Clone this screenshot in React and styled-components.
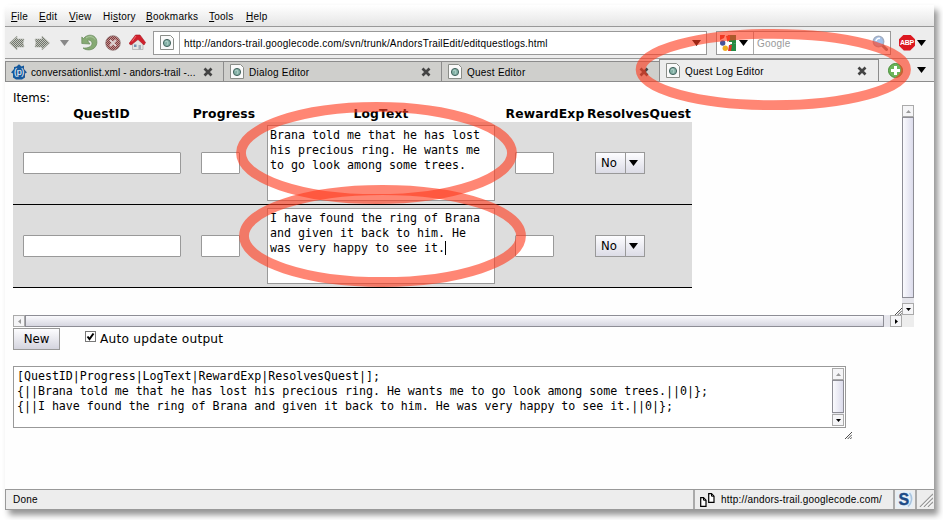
import React from "react";
import styled, { createGlobalStyle } from "styled-components";

const ui = '"Liberation Sans", Arial, sans-serif';
const page = '"DejaVu Sans", Verdana, sans-serif';
const mono = '"DejaVu Sans Mono", monospace';

const Global = createGlobalStyle`
  * { box-sizing: border-box; }
  html, body { margin: 0; background: #fff; overflow: hidden; }
  svg { display: block; flex: none; }
`;

const Desktop = styled.div`
  position: relative;
  width: 943px;
  height: 520px;
  padding: 5px 9px 10px 5px;
  background: #fff;
  overflow: hidden;
`;
const Window = styled.div`
  width: 929px;
  height: 505px;
  display: flex;
  flex-direction: column;
  background: #fefefe;
  box-shadow: 4px 5px 6px rgba(0, 0, 0, 0.42);
  font: 10px ${ui};
  letter-spacing: 0.19px;
  color: #000;
`;
const MenuBar = styled.nav`
  height: 22px;
  flex: none;
  display: flex;
  padding: 1px 0 0 6px;
  background: linear-gradient(#fff, #e5e5e5);
  border-bottom: 1px solid #999;
`;
const MenuItem = styled.span`
  width: ${(p) => p.$w}px;
  line-height: 21px;
  white-space: nowrap;
  letter-spacing: 0.25px;
  u { text-underline-offset: 1px; }
`;
const Toolbar = styled.div`
  height: 32px;
  flex: none;
  display: flex;
  align-items: center;
  background: #ededed;
  border-bottom: 1px solid #999;
`;
const NavIcons = styled.div`
  width: 148px;
  flex: none;
  display: flex;
  align-items: center;
  padding-left: 4px;
`;
const Slot = styled.div`
  width: ${(p) => p.$w}px;
  flex: none;
  display: flex;
  align-items: center;
`;
const Field = styled.div`
  width: ${(p) => p.$w}px;
  height: 24px;
  flex: none;
  display: flex;
  align-items: center;
  background: #fff;
  border: 1px solid #999;
  margin-right: ${(p) => p.$gap}px;
`;
const FieldIcon = styled.div`
  width: ${(p) => p.$w}px;
  height: 100%;
  flex: none;
  display: flex;
  align-items: center;
  gap: 3px;
  padding-left: ${(p) => p.$pad}px;
  border-right: 1px solid #aaa;
`;
const FieldText = styled.span`
  flex: 1;
  padding: 2px 0 0 ${(p) => (p.$hint ? 3 : 4)}px;
  color: ${(p) => (p.$hint ? "#999" : "#000")};
  white-space: nowrap;
`;
const TabStrip = styled.div`
  height: 23px;
  flex: none;
  display: flex;
  align-items: flex-end;
  background: #ededed;
  border-bottom: 1px solid #8c8c8c;
`;
const Tab = styled.div`
  width: ${(p) => p.$w}px;
  height: ${(p) => (p.$active ? 22 : 20)}px;
  flex: none;
  display: flex;
  align-items: center;
  padding-left: ${(p) => p.$start || 6}px;
  padding-right: ${(p) => p.$end}px;
  background: ${(p) => (p.$active ? "#ededed" : "#cfcfcc")};
  border-top: 1px solid #8c8c8c;
  border-left: 1px solid #8c8c8c;
  border-right: ${(p) => (p.$active ? "1px solid #8c8c8c" : "none")};
`;
const TabTitle = styled.span`
  flex: 1;
  padding: 2px 0 0 ${(p) => p.$gap || 5}px;
  letter-spacing: ${(p) => (p.$tight ? 0.1 : 0.24)}px;
  white-space: nowrap;
`;
const TabActions = styled.div`
  flex: 1;
  height: 22px;
  display: flex;
  align-items: center;
  gap: 14px;
  padding-left: 9px;
`;

const Content = styled.main`
  flex: 1;
  min-height: 0;
  display: flex;
  flex-direction: column;
  padding: 8px 0 0 8px;
  font: 12px ${page};
  letter-spacing: 0;
`;
const ItemsLabel = styled.div`
  height: 15px;
  line-height: 16px;
  font-size: 11.8px;
`;
const ScrollPane = styled.section`
  width: 901px;
  height: 222px;
  flex: none;
  display: grid;
  grid-template-columns: 889px 12px;
  grid-template-rows: 210px 12px;
`;
const Viewport = styled.div`
  display: flex;
  justify-content: space-between;
  align-items: flex-end;
`;
const Corner = styled.div`
  background: #ededed;
`;
const Table = styled.div`
  width: 679px;
  align-self: flex-start;
`;
const columns = "177px 68px 246px 82px 106px";
const HeadRow = styled.div`
  display: grid;
  grid-template-columns: ${columns};
  height: 17px;
  line-height: 18px;
  font-weight: bold;
  font-size: 12.3px;
  letter-spacing: 0.15px;
  text-align: center;
`;
const HeadCell = styled.div`
  display: flex;
  justify-content: center;
  white-space: nowrap;
`;
const Row = styled.div`
  display: grid;
  grid-template-columns: ${columns};
  height: 83px;
  align-items: center;
  background: #ddd;
  border-bottom: 1px solid #000;
`;
const Cell = styled.div`
  display: flex;
  padding-left: ${(p) => p.$pad}px;
`;
const Input = styled.div`
  width: ${(p) => p.$w}px;
  height: 22px;
  background: #fff;
  border: 1px solid #999;
  border-radius: 1px;
`;
const TextArea = styled.div`
  width: 228px;
  height: 76px;
  padding: 2px 2px;
  background: #fff;
  border: 1px solid #999;
  font: 11.63px/15px ${mono};
  white-space: pre;
`;
const Caret = styled.span`
  display: inline-block;
  width: 1px;
  height: 14px;
  background: #000;
  vertical-align: -3px;
`;
const Select = styled.div`
  width: 50px;
  height: 22px;
  display: flex;
  background: linear-gradient(#fdfdff, #dcdce6);
  border: 1px solid #999;
`;
const SelectText = styled.span`
  width: 30px;
  padding-left: 5px;
  line-height: 20px;
  font-size: 11.7px;
  border-right: 1px solid #999;
`;
const SelectArrow = styled.span`
  flex: 1;
  display: flex;
  align-items: center;
  padding-left: 3px;
`;

const VBar = styled.div`
  width: 12px;
  height: ${(p) => p.$h}px;
  display: flex;
  flex-direction: column;
  justify-content: space-between;
  background: #e6e6ec;
`;
const HBar = styled.div`
  height: 12px;
  display: flex;
  background: #e6e6ec;
`;
const BarButton = styled.div`
  width: 12px;
  height: 12px;
  flex: none;
  display: flex;
  align-items: center;
  justify-content: center;
  background: #f5f5f7;
  border: 1px solid #aaa;
`;
const VThumb = styled.div`
  flex: 1;
  margin-bottom: ${(p) => p.$gap}px;
  background: linear-gradient(90deg, #fafafd, #dcdcec);
  border: 1px solid #8d8d95;
`;
const HThumb = styled.div`
  flex: 1;
  margin-right: 6px;
  background: linear-gradient(#fafafd, #d6d6e0);
  border: 1px solid #8d8d95;
`;
const Controls = styled.div`
  height: 39px;
  flex: none;
  display: flex;
  align-items: flex-start;
  padding-top: 1px;
`;
const Button = styled.div`
  width: 47px;
  height: 22px;
  margin-right: 25px;
  line-height: 20px;
  text-align: center;
  font-size: 11.8px;
  background: linear-gradient(#fdfdff, #d4d4de);
  border: 1px solid #999;
`;
const CheckBox = styled.div`
  width: 11px;
  height: 11px;
  margin: 3px 4px 0 0;
  border: 1px solid #777;
  background: #fff;
`;
const CheckLabel = styled.span`
  line-height: 22px;
  font-size: 12.2px;
  letter-spacing: 0.23px;
`;
const Output = styled.div`
  width: 833px;
  height: 62px;
  flex: none;
  display: flex;
  justify-content: space-between;
  padding: 1px 1px 1px 3px;
  border: 1px solid #999;
  background: #fff;
  font: 11.63px/15px ${mono};
  letter-spacing: -0.02px;
  white-space: pre;
`;
const OutputText = styled.div`
  padding-top: 1px;
`;
const GripRow = styled.div`
  width: 839px;
  height: 11px;
  display: flex;
  align-items: flex-end;
  justify-content: flex-end;
`;
const StatusBar = styled.footer`
  height: 21px;
  flex: none;
  display: flex;
  background: #ededed;
  border: 1px solid #999;
  border-right: none;
`;
const StatusCell = styled.div`
  width: ${(p) => p.$w}px;
  display: flex;
  align-items: center;
  padding-left: ${(p) => p.$pad}px;
  gap: 6px;
  letter-spacing: 0.2px;
  white-space: nowrap;
  border-right: ${(p) => (p.$last ? "none" : "2px solid #aaa")};
`;
const Marks = styled.svg`
  position: absolute;
  left: 0;
  top: 0;
  pointer-events: none;
`;
const AbpBadge = styled.span`
  width: 16px;
  height: 16px;
  display: flex;
  align-items: center;
  justify-content: center;
  background: #dc1820;
  clip-path: polygon(30% 0, 70% 0, 100% 30%, 100% 70%, 70% 100%, 30% 100%, 0 70%, 0 30%);
  color: #fff;
  font-weight: bold;
  font-size: 7px;
  line-height: 9px;
  letter-spacing: -0.2px;
`;

const Triangle = ({ w = 9, h = 6, fill = "#000" }) => (
  <svg width={w} height={h} viewBox="0 0 10 6" preserveAspectRatio="none">
    <path d="M0 0H10L5 6Z" fill={fill} />
  </svg>
);
const arrows = {
  up: "M1 5H6L3.5 2Z",
  down: "M1 2H6L3.5 5Z",
  left: "M5 1V6L2 3.5Z",
  right: "M2 1V6L5 3.5Z",
};
const ScrollArrow = ({ dir, dim }) => (
  <BarButton>
    <svg width="7" height="7"><path d={arrows[dir]} fill={dim ? "#999" : "#000"} /></svg>
  </BarButton>
);
const Back = ({ flip }) => (
  <svg width="16" height="16" viewBox="0 0 16 16">
    <defs>
      <pattern id="dither" width="2" height="2" patternUnits="userSpaceOnUse">
        <rect width="2" height="2" fill="#c3c6bd" />
        <rect width="1" height="1" fill="#6f736b" />
        <rect x="1" y="1" width="1" height="1" fill="#6f736b" />
      </pattern>
    </defs>
    <path
      d={flip ? "M1 4H8V1L15.5 8L8 15V12H1L2 8Z" : "M15 4H8V1L.5 8L8 15V12H15L14 8Z"}
      fill="url(#dither)"
      stroke="#a6aaa1"
      strokeWidth=".5"
    />
  </svg>
);
const Reload = () => (
  <svg width="17" height="17" viewBox="0 0 17 17">
    <path
      d="M4 3C8 0 13 .8 15 4.5C17.3 9 15 14 10.5 15.5C7.5 16.4 4 15.8 2 14C7 14.5 10.8 12.5 11 9.5C11 7 8.5 5.5 6.5 6.5L9 10L.8 9.5V3L2.5 4.5Z"
      fill="#86aa73"
      stroke="#66885a"
      strokeWidth=".7"
    />
    <path d="M5 4C8 1.7 12.5 2.5 14 5.5" fill="none" stroke="#b2cca5" strokeWidth="1" />
  </svg>
);
const Stop = () => (
  <svg width="16" height="16" viewBox="0 0 16 16">
    <defs>
      <pattern id="stopDither" width="2" height="2" patternUnits="userSpaceOnUse">
        <rect width="2" height="2" fill="#c78d8d" />
        <rect width="1" height="1" fill="#773e3e" />
        <rect x="1" y="1" width="1" height="1" fill="#773e3e" />
      </pattern>
    </defs>
    <circle cx="8" cy="8" r="7.3" fill="url(#stopDither)" stroke="#8a7070" strokeWidth=".7" />
    <path d="M5 5L11 11M11 5L5 11" stroke="#ddd0d0" strokeWidth="2" />
  </svg>
);
const HomeIcon = () => (
  <svg width="17" height="17" viewBox="0 0 17 17">
    <path d="M3.5 8V15.5H14V8L8.5 4Z" fill="#e4e6e3" stroke="#aaa" strokeWidth=".7" />
    <path d="M9.5 11H12V15.5H9.5Z" fill="#a5b0bb" />
    <path d="M5 10.5H7.5V13H5Z" fill="#7192b2" />
    <path d="M0 9.5L6.5 1H11L16.5 8.5L15 11L9 5.5L2 11Z" fill="#d0202c" stroke="#a91923" strokeWidth=".6" />
    <path d="M7 2L3 7.5" stroke="#ee6b70" />
  </svg>
);
const PageIcon = () => (
  <svg width="14" height="15" viewBox="0 0 14 15">
    <path d="M.5 .5H10.5L13.5 3.5V14.5H.5Z" fill="#fafafa" stroke="#8a8d88" />
    <circle cx="7" cy="8" r="3.6" fill="#83b0a5" stroke="#45645f" />
    <path d="M5 7L7 6L8 8L7 10" stroke="#b5d5cc" fill="none" />
  </svg>
);
const Wiki = () => (
  <svg width="16" height="16" viewBox="0 0 16 16">
    <path d="M8 .3L10.5 2.5L13 1.5V5L16 8.5L14 9.5V13.5L11 15.5H5L2 13.5V9.5L0 8.5L3 5V3L5.5 2.5Z" fill="#17599c" />
    <text x="8" y="11" textAnchor="middle" letterSpacing="-.4" fontFamily="Liberation Sans" fontSize="9" fill="#fff">(p)</text>
  </svg>
);
const Close = () => (
  <svg width="10" height="10" viewBox="0 0 10 10">
    <path d="M1.5 1.5L8.5 8.5M8.5 1.5L1.5 8.5" stroke="#444" strokeWidth="2.7" />
  </svg>
);
const GoogleIcon = () => (
  <svg width="16" height="16" viewBox="0 0 16 16">
    <rect width="16" height="16" fill="#fff" />
    <path d="M8 0H16V9L9 7Z" fill="#23883f" />
    <path d="M11 7L16 9V16H9V12Z" fill="#238b43" />
    <path d="M9 10H12L11 16H8Z" fill="#dd3327" />
    <path d="M0 0H5L4 3L0 5Z" fill="#d8322f" />
    <path d="M6 1L10 0V5L7.5 7Z" fill="#e6402f" />
    <path d="M6 7H12V9L7 10Z" fill="#fff" />
    <circle cx="2.7" cy="8" r="2.7" fill="#46529a" />
    <circle cx="5.3" cy="13.2" r="2.7" fill="#f0ae21" />
  </svg>
);
const SearchIcon = () => (
  <svg width="16" height="16" viewBox="0 0 16 16">
    <path d="M10 10L14.5 14.5" stroke="#888" strokeWidth="3" strokeLinecap="round" />
    <circle cx="6.5" cy="6.5" r="5.2" fill="#a5c2ea" stroke="#a3aec2" strokeWidth="1.5" />
    <path d="M4 6A3 3 0 0 1 8 3.5" fill="none" stroke="#fff" strokeWidth="1.5" />
  </svg>
);
const Plus = () => (
  <svg width="15" height="15" viewBox="0 0 15 15">
    <circle cx="7.5" cy="7.5" r="7" fill="#6cb55a" stroke="#478d38" />
    <path d="M7.5 3V12M3 7.5H12" stroke="#fff" strokeWidth="3" />
  </svg>
);
const Grip = ({ size = 7, color = "#333" }) => (
  <svg width={size} height={size} viewBox="0 0 8 8">
    <path d="M0 8L8 0M3 8L8 3M6 8L8 6" stroke={color} strokeWidth="1" />
  </svg>
);
const CornerGrip = () => (
  <svg width="14" height="14" viewBox="0 0 14 14">
    <path d="M1 14L14 1M5 14L14 5M9 14L14 9" stroke="#999" strokeWidth="1.3" />
    <path d="M2.5 14L14 2.5M6.5 14L14 6.5M10.5 14L14 10.5" stroke="#fff" />
  </svg>
);
const Pages = () => (
  <svg width="15" height="14" viewBox="0 0 15 14">
    <path d="M.7 4.7H3.5L6 7.2V13.3H.7ZM8.7 .7H11.5L14 3.2V9.3H8.7Z" fill="#fff" stroke="#000" strokeWidth="1.2" />
    <path d="M3.5 4.7V7.2H6M11.5 .7V3.2H14" fill="none" stroke="#000" />
  </svg>
);
const Stylish = () => (
  <svg width="17" height="17" viewBox="0 0 17 17">
    <rect width="17" height="17" rx="3" fill="#e6eff7" />
    <path d="M13.5 2C17 6 16 12 12 15.5" fill="none" stroke="#a9c4de" strokeWidth="1.5" />
    <text x="8" y="14" textAnchor="middle" fontFamily="Liberation Sans" fontSize="16" fontWeight="bold" fill="#1c4b87" stroke="#1c4b87" strokeWidth=".4">S</text>
  </svg>
);

const menus = [["", "F", "ile", 28], ["", "E", "dit", 30], ["", "V", "iew", 34], ["Hi", "s", "tory", 43], ["", "B", "ookmarks", 63], ["", "T", "ools", 37], ["", "H", "elp", 30]];
const headers = ["QuestID", "Progress", "LogText", "RewardExp", "ResolvesQuest"];
const rows = [
  "Brana told me that he has lost\nhis precious ring. He wants me\nto go look among some trees.",
  "I have found the ring of Brana\nand given it back to him. He\nwas very happy to see it.",
];
const output = `[QuestID|Progress|LogText|RewardExp|ResolvesQuest|];
{||Brana told me that he has lost his precious ring. He wants me to go look among some trees.||0|};
{||I have found the ring of Brana and given it back to him. He was very happy to see it.||0|};`;

export default function App() {
  return (
    <Desktop>
      <Global />
      <Window>
        <MenuBar>
          {menus.map(([a, k, b, w]) => (
            <MenuItem key={b} $w={w}>{a}<u>{k}</u>{b}</MenuItem>
          ))}
        </MenuBar>
        <Toolbar>
          <NavIcons>
            <Slot $w={25}><Back /></Slot>
            <Slot $w={26}><Back flip /></Slot>
            <Slot $w={21}><Triangle fill="#888" /></Slot>
            <Slot $w={24}><Reload /></Slot>
            <Slot $w={24}><Stop /></Slot>
            <Slot $w={20}><HomeIcon /></Slot>
          </NavIcons>
          <Field $w={554} $gap={9}>
            <FieldIcon $w={26} $pad={6}><PageIcon /></FieldIcon>
            <FieldText>http://andors-trail.googlecode.com/svn/trunk/AndorsTrailEdit/editquestlogs.html</FieldText>
            <Slot $w={14}><Triangle /></Slot>
          </Field>
          <Field $w={175} $gap={8}>
            <FieldIcon $w={37} $pad={3}><GoogleIcon /><Triangle /></FieldIcon>
            <FieldText $hint>Google</FieldText>
            <Slot $w={18}><SearchIcon /></Slot>
          </Field>
          <Slot $w={18}><AbpBadge>ABP</AbpBadge></Slot>
          <Triangle />
        </Toolbar>
        <TabStrip>
          <Tab $w={218} $start={5} $end={10}><Wiki /><TabTitle $gap={4} $tight>conversationlist.xml - andors-trail -...</TabTitle><Close /></Tab>
          <Tab $w={218} $end={10}><PageIcon /><TabTitle>Dialog Editor</TabTitle><Close /></Tab>
          <Tab $w={218} $end={10}><PageIcon /><TabTitle>Quest Editor</TabTitle><Close /></Tab>
          <Tab $w={220} $end={11} $active><PageIcon /><TabTitle>Quest Log Editor</TabTitle><Close /></Tab>
          <TabActions><Plus /><Triangle /></TabActions>
        </TabStrip>
        <Content>
          <ItemsLabel>Items:</ItemsLabel>
          <ScrollPane>
            <Viewport>
              <Table>
                <HeadRow>{headers.map((h) => <HeadCell key={h}>{h}</HeadCell>)}</HeadRow>
                {rows.map((text, i) => (
                  <Row key={text}>
                    <Cell $pad={10}><Input $w={158} /></Cell>
                    <Cell $pad={11}><Input $w={39} /></Cell>
                    <Cell $pad={9}><TextArea>{text}{i === 1 && <Caret />}</TextArea></Cell>
                    <Cell $pad={11}><Input $w={39} /></Cell>
                    <Cell $pad={9}>
                      <Select><SelectText>No</SelectText><SelectArrow><Triangle /></SelectArrow></Select>
                    </Cell>
                  </Row>
                ))}
              </Table>
              <Grip />
            </Viewport>
            <VBar $h={210}><ScrollArrow dir="up" dim /><VThumb $gap={5} /><ScrollArrow dir="down" /></VBar>
            <HBar><ScrollArrow dir="left" dim /><HThumb /><ScrollArrow dir="right" /></HBar>
            <Corner />
          </ScrollPane>
          <Controls>
            <Button>New</Button>
            <CheckBox><svg width="9" height="9"><path d="M1.5 4.5L3.5 7L7.5 1.5" fill="none" stroke="#000" strokeWidth="2" /></svg></CheckBox>
            <CheckLabel>Auto update output</CheckLabel>
          </Controls>
          <Output>
            <OutputText>{output}</OutputText>
            <VBar $h={58}><ScrollArrow dir="up" dim /><VThumb $gap={1} /><ScrollArrow dir="down" /></VBar>
          </Output>
          <GripRow><Grip /></GripRow>
        </Content>
        <StatusBar>
          <StatusCell $w={689} $pad={7}>Done</StatusCell>
          <StatusCell $w={200} $pad={5}><Pages />http://andors-trail.googlecode.com/</StatusCell>
          <StatusCell $w={22} $pad={1}><Stylish /></StatusCell>
          <StatusCell $w={17} $pad={2} $last><CornerGrip /></StatusCell>
        </StatusBar>
      </Window>
      <Marks width="943" height="520" fill="none" stroke="#ff3c1e" strokeOpacity=".62" strokeWidth="9.8">
        <ellipse cx="376.5" cy="153" rx="135.5" ry="46" />
        <ellipse cx="382.5" cy="236" rx="138.5" ry="46" />
        <ellipse cx="773.3" cy="69.5" rx="132.7" ry="35.7" />
      </Marks>
    </Desktop>
  );
}
